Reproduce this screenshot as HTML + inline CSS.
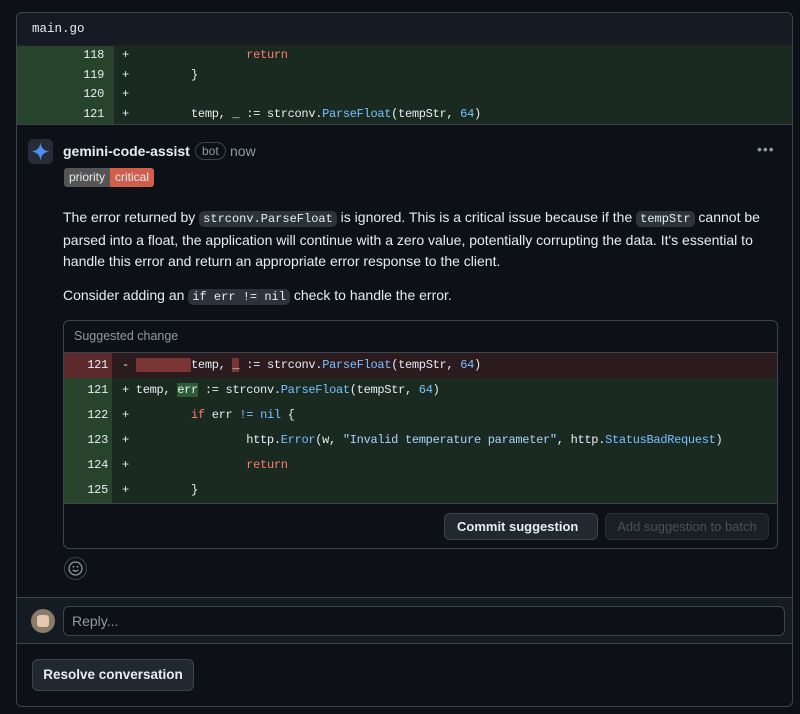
<!DOCTYPE html>
<html><head><style>
*{box-sizing:border-box;margin:0;padding:0}
body{width:800px;height:714px;background:#0d1117;font-family:"Liberation Sans",sans-serif;color:#e6edf3;position:relative;overflow:hidden}
.abs{position:absolute}
.box{left:16px;top:12px;width:777px;height:695px;border:1px solid #3d444d;border-radius:6px;background:#0d1117;overflow:hidden}
.mono{font-family:"Liberation Mono",monospace;font-size:12px;letter-spacing:-0.3px;white-space:pre}
.row{position:absolute;left:0;right:0;height:19.5px;line-height:19.5px}
.ln{position:absolute;left:0;width:97px;height:100%;background:#27432c;text-align:right;padding-right:10px;color:#e6edf3}
.cd{position:absolute;left:97px;right:0;height:100%;background:#1b2a21;padding-left:8px}
.kw{color:#ff7b72}.fn{color:#79c0ff}.num{color:#79c0ff}.str{color:#a5d6ff}
.code{background:#2d333b;border-radius:5px;padding:1px 4px;font-family:"Liberation Mono",monospace;font-size:12px}
p{font-size:14px;line-height:21px}
.srow{position:absolute;left:0;right:0;height:25px;line-height:25px}
.sln{position:absolute;left:0;width:48px;height:100%;text-align:right;padding-right:4px;background:#27432c}
.scd{position:absolute;left:48px;right:0;height:100%;padding-left:10px;background:#1b2a21}
.btn{border:1px solid #3d444d;border-radius:6px;background:#212830;font-size:13px;font-weight:bold;text-align:center}
</style></head><body>
<div class="abs box">
 <div class="abs" style="left:0;top:0;right:0;height:33px;background:#151b23;border-bottom:1px solid #222"></div>
 <div class="abs mono" style="left:15px;top:9px;font-size:12.5px;letter-spacing:0">main.go</div>
 <div class="abs mono" style="left:0;top:33px;right:0;height:78px">
  <div class="row" style="top:0"><div class="ln">118</div><div class="cd">+                 <span class="kw">return</span></div></div>
  <div class="row" style="top:19.5px"><div class="ln">119</div><div class="cd">+         }</div></div>
  <div class="row" style="top:39px"><div class="ln">120</div><div class="cd">+</div></div>
  <div class="row" style="top:58.5px"><div class="ln">121</div><div class="cd">+         temp, _ := strconv.<span class="fn">ParseFloat</span>(tempStr, <span class="num">64</span>)</div></div>
 </div>
 <div class="abs" style="left:0;right:0;top:111px;height:1px;background:#3d444d"></div>
 <div class="abs" style="left:11px;top:126px;width:25px;height:25px;border-radius:5px;background:#262c36"><svg width="25" height="25" viewBox="0 0 25 25"><path d="M12.5 3 C13 9 16 12 22 12.5 C16 13 13 16 12.5 22 C12 16 9 13 3 12.5 C9 12 12 9 12.5 3Z" fill="#4c8df6"/></svg></div>
 <div class="abs" style="left:46px;top:130px;font-size:14px;font-weight:bold">gemini-code-assist</div>
 <div class="abs" style="left:178px;top:129px;border:1px solid #3d444d;border-radius:10px;padding:1px 6px;font-size:12px;color:#9198a1">bot</div>
 <div class="abs" style="left:213px;top:130px;font-size:14px;color:#9198a1">now</div>
 <div class="abs" style="left:740px;top:128px;color:#9198a1;font-size:14px;letter-spacing:1px">•••</div>
 <div class="abs" style="left:47px;top:155px;height:19px;font-size:12px;line-height:19px;border-radius:3px;overflow:hidden;display:flex"><span style="background:#555;padding:0 5px">priority</span><span style="background:#d05e4b;padding:0 5px">critical</span></div>
 <p class="abs" style="left:46px;top:194px;width:720px">The error returned by <span class="code">strconv.ParseFloat</span> is ignored. This is a critical issue because if the <span class="code">tempStr</span> cannot be parsed into a float, the application will continue with a zero value, potentially corrupting the data. It's essential to handle this error and return an appropriate error response to the client.</p>
 <p class="abs" style="left:46px;top:272px">Consider adding an <span class="code">if err != nil</span> check to handle the error.</p>
 <div class="abs" style="left:46px;top:307px;width:715px;height:229px;border:1px solid #3d444d;border-radius:6px;overflow:hidden">
  <div class="abs" style="left:10px;top:8px;font-size:12.5px;color:#9198a1">Suggested change</div>
  <div class="abs mono" style="left:0;right:0;top:31px;height:151px;border-top:1px solid #3d444d">
   <div class="srow" style="top:0"><div class="sln" style="background:#5c2a2c">121</div><div class="scd" style="background:#2b1a1e">- <span style="background:#7a3535;color:transparent;border-radius:2px">        </span>temp, <span style="background:#7a3535">_</span> := strconv.<span class="fn">ParseFloat</span>(tempStr, <span class="num">64</span>)</div></div>
   <div class="srow" style="top:25px"><div class="sln">121</div><div class="scd">+ temp, <span style="background:#2e5b36">err</span> := strconv.<span class="fn">ParseFloat</span>(tempStr, <span class="num">64</span>)</div></div>
   <div class="srow" style="top:50px"><div class="sln">122</div><div class="scd">+         <span class="kw">if</span> err <span class="fn">!=</span> <span class="fn">nil</span> {</div></div>
   <div class="srow" style="top:75px"><div class="sln">123</div><div class="scd">+                 http.<span class="fn">Error</span>(w, <span class="str">"Invalid temperature parameter"</span>, http.<span class="fn">StatusBadRequest</span>)</div></div>
   <div class="srow" style="top:100px"><div class="sln">124</div><div class="scd">+                 <span class="kw">return</span></div></div>
   <div class="srow" style="top:125px"><div class="sln">125</div><div class="scd">+         }</div></div>
  </div>
  <div class="abs" style="left:0;right:0;top:182px;height:1px;background:#3d444d"></div>
  <div class="abs btn" style="left:380px;top:192px;width:154px;height:27px;line-height:25px;text-align:left;padding-left:12px">Commit suggestion <span style="font-size:8px;color:#9198a1;margin-left:8px">▼</span></div>
  <div class="abs btn" style="left:541px;top:192px;width:164px;height:27px;line-height:25px;color:#4a5058;border-color:#2a2f36;background:#1a1f26;font-weight:normal">Add suggestion to batch</div>
 </div>
 <div class="abs" style="left:47px;top:544px;width:23px;height:23px;border-radius:50%;border:1px solid #3d444d"><svg width="21" height="21" viewBox="0 0 21 21"><circle cx="10.5" cy="10.5" r="6.5" stroke="#9198a1" stroke-width="1.3" fill="none"/><path d="M7.7 11.8 Q10.5 14.5 13.3 11.8" stroke="#9198a1" stroke-width="1.3" fill="none"/><circle cx="8.5" cy="8.8" r=".9" fill="#9198a1"/><circle cx="12.5" cy="8.8" r=".9" fill="#9198a1"/></svg></div>
 <div class="abs" style="left:0;right:0;top:584px;height:47px;background:#151b23;border-top:1px solid #3d444d;border-bottom:1px solid #3d444d"></div>
 <div class="abs" style="left:14px;top:596px;width:24px;height:24px;border-radius:50%;background:#8a7a6a;overflow:hidden"><div style="margin:6px auto 0;width:12px;height:12px;background:#e6c8b0;border-radius:3px"></div></div>
 <div class="abs" style="left:46px;top:593px;width:722px;height:30px;border:1px solid #3d444d;border-radius:6px;background:#0d1117;font-size:14px;color:#9198a1;line-height:28px;padding-left:8px">Reply...</div>
 <div class="abs btn" style="left:15px;top:646px;width:162px;height:32px;line-height:30px;font-size:13.5px">Resolve conversation</div>
</div>
</body></html>
